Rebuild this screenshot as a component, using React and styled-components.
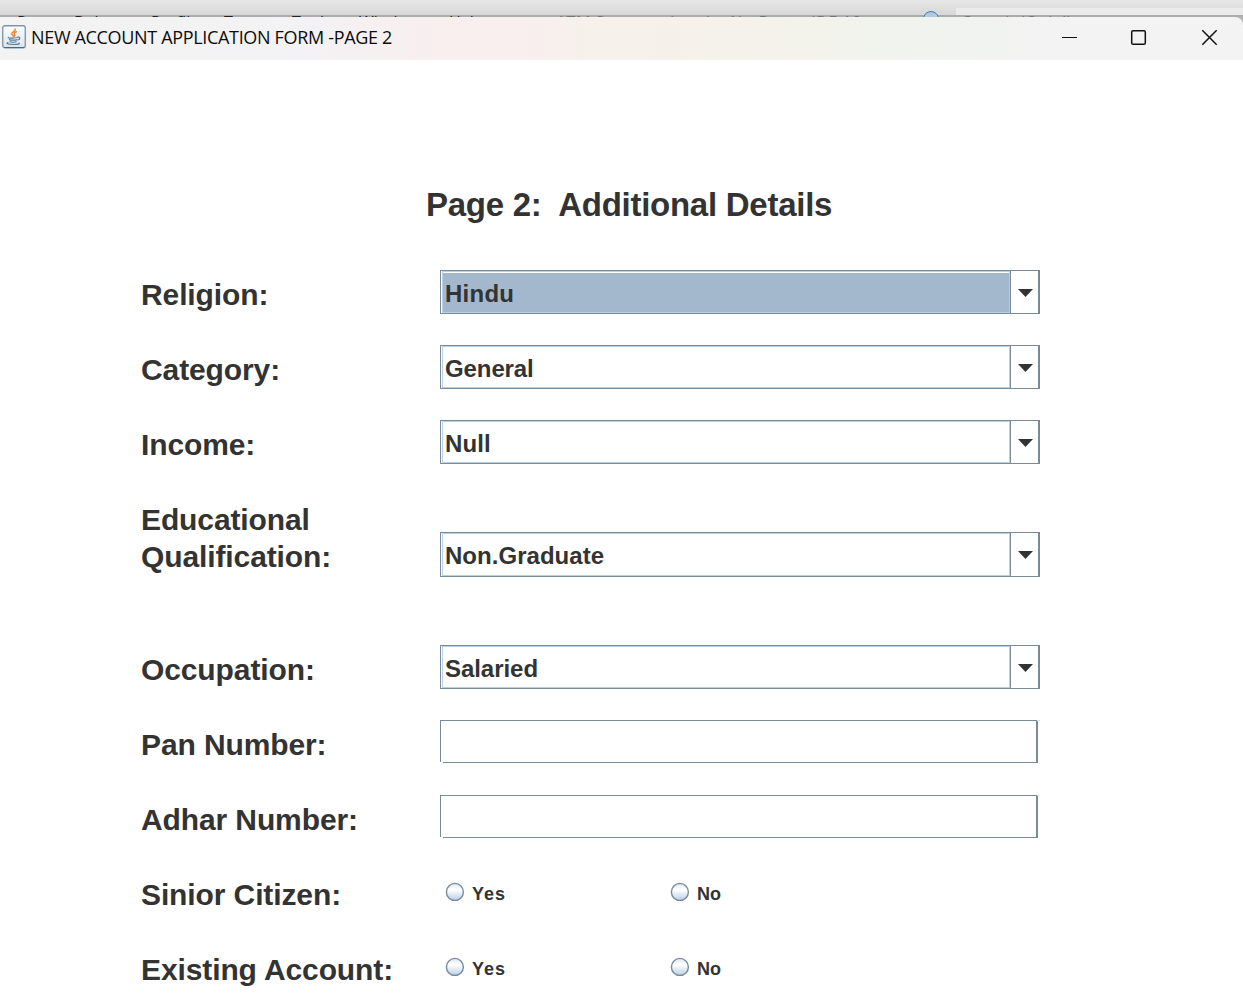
import React from "react";
import styled, { createGlobalStyle } from "styled-components";

const GlobalStyle = createGlobalStyle`
  * { box-sizing: border-box; }
  body { margin: 0; background: #fff; overflow: hidden; }
`;

const Screen = styled.div`
  width: 1243px;
  height: 993px;
  overflow: hidden;
  background: #fff;
  color: #333;
  font-family: "Liberation Sans", Arial, sans-serif;
`;

const Backdrop = styled.div`
  position: relative;
  height: 17px;
  overflow: hidden;
  background: linear-gradient(to bottom, #e8e8e8, #d6d6d6 15px, #abadab 15px);
  font: 16px/20px "Open Sans", "Noto Sans", sans-serif;
`;

const Search = styled.div`
  position: absolute;
  left: 956px;
  top: 8px;
  right: 0;
  height: 7px;
  background: #ebebeb;
`;

const MenuWord = styled.span`
  position: absolute;
  left: ${(p) => p.$x}px;
  top: 12px;
  white-space: pre;
  letter-spacing: ${(p) => p.$track || 0}px;
  color: ${(p) => (p.$dim ? "#747674" : "#222")};
`;

const Ring = styled.span`
  position: absolute;
  left: 923px;
  top: 11px;
  width: 16px;
  height: 16px;
  border: 1px solid #3b7cc0;
  border-radius: 50%;
  background: #b4c9de;
`;

const TitleWrap = styled.div`
  background: #b4b6b4;
`;

const TitleBar = styled.header`
  display: flex;
  align-items: flex-start;
  height: 43px;
  padding-left: 2px;
  border-top-right-radius: 8px;
  background: linear-gradient(to right, #f3f3f3 0, #f3f2f4 300px, #f8efee 440px, #f8efee 520px, #f6f1eb 600px, #f5f2ea 740px, #f2f3ec 840px, #f1f3f0 960px, #f3f3f3 1070px);
`;

const JavaIcon = styled.svg`
  flex: none;
  width: 24px;
  height: 24px;
  margin-top: 8px;
`;

const WindowTitle = styled.h1`
  flex: 1;
  margin: 8px 0 0 5px;
  color: #0c0c0c;
  font: 400 18px/25px "Open Sans", "Noto Sans", sans-serif;
  letter-spacing: -0.33px;
  white-space: nowrap;
`;

const Controls = styled.svg`
  flex: none;
  width: 193px;
  height: 43px;
`;

const Form = styled.main`
  padding: 127px 0 0 141px;
`;

const Heading = styled.h2`
  margin: 0 0 0 285px;
  height: 36px;
  font-size: 33px;
  line-height: 36px;
  letter-spacing: -0.26px;
  white-space: pre;
`;

const Fields = styled.div`
  display: flex;
  flex-direction: column;
  margin-top: 47px;
`;

const Row = styled.div`
  display: flex;
  height: ${(p) => (p.$tall ? 150 : 75)}px;
`;

const Label = styled.div`
  flex: none;
  width: 299px;
  padding-top: 6px;
  font-size: 30px;
  font-weight: 700;
  line-height: 37px;
  letter-spacing: -0.11px;
  white-space: pre-line;
`;

const Combo = styled.div`
  display: flex;
  width: 600px;
  height: ${(p) => (p.$low ? 45 : 44)}px;
  margin-top: ${(p) => (p.$low ? 37 : 0)}px;
  border: 1px solid #7a8a99;
  border-right-width: 2px;
`;

const Value = styled.div`
  flex: 1;
  margin-left: 1px;
  padding: 1px 0 0 2px;
  border: 1px solid #b8cfe5;
  background: ${(p) => (p.$focused ? "#a3b8cc" : "#fff")};
  box-shadow: ${(p) => (p.$focused ? "inset 0 1px #fff" : "none")};
  font-size: 24px;
  font-weight: 700;
  line-height: 42px;
  letter-spacing: ${(p) => p.$track || 0}px;
`;

const ArrowButton = styled.div`
  display: flex;
  justify-content: center;
  width: 28px;
  padding: 18px 0 0 1px;
  border-left: 1px solid #7a8a99;
`;

const Arrow = styled.svg`
  width: 15px;
  height: 8px;
  fill: #333;
`;

const TextBoxFrame = styled.div`
  position: relative;
  width: 600px;
  height: 43px;

  &::before, &::after {
    content: "";
    position: absolute;
    width: 3px;
    height: 1px;
    background: #fff;
  }
  &::before { left: 0; bottom: 0; }
  &::after { right: 0; top: 0; background: #e4e7ea; }
`;

const TextBox = styled.input`
  display: block;
  width: 598px;
  height: 43px;
  padding: 4px;
  border: 1px solid #7a8a99;
  border-right-width: 2px;
  border-radius: 0;
  outline: none;
  background: #fff;
  font: 700 24px "Liberation Sans", Arial, sans-serif;
`;

const Option = styled.label`
  display: flex;
  width: 225px;
  padding: 12px 0 0 5px;
  gap: 7px;
  font-size: 18px;
  font-weight: 700;
  line-height: 24px;
  letter-spacing: ${(p) => p.$track || 0}px;
`;

const RadioDot = styled.svg`
  flex: none;
  width: 20px;
  height: 20px;
`;

function Radio() {
  return (
    <RadioDot viewBox="0 0 20 20">
      <defs>
        <linearGradient id="bead" x2="0" y2="1">
          <stop stopColor="#d8e4f0" />
          <stop offset=".33" stopColor="#fff" />
          <stop offset=".42" stopColor="#fafcfe" />
          <stop offset="1" stopColor="#b8cfe5" />
        </linearGradient>
      </defs>
      <circle cx="9.9" cy="9.9" r="8.5" fill="url(#bead)" stroke="#7a8a99" strokeWidth="1.4" />
    </RadioDot>
  );
}

const combos = [
  { label: "Religion:", value: "Hindu", focused: true, track: 0.25 },
  { label: "Category:", value: "General", track: -0.1 },
  { label: "Income:", value: "Null", track: 0.15 },
  { label: "Educational\nQualification:", value: "Non.Graduate", low: true, track: 0.03 },
  { label: "Occupation:", value: "Salaried", track: -0.05 },
];

const menu = [
  ["Run", 17], ["Debug", 74], ["Profile", 151], ["Team", 224],
  ["Tools", 292], ["Window", 359], ["Help", 449],
];

export default function App() {
  return (
    <Screen>
      <GlobalStyle />
      <Backdrop>
        <Search />
        {menu.map(([word, x]) => <MenuWord key={word} $x={x}>{word}</MenuWord>)}
        <MenuWord $x={556} $track={0.5} $dim>ATM System - Apache NetBeans IDE 18</MenuWord>
        <MenuWord $x={963} $track={0.3} $dim>Search (Ctrl+I)</MenuWord>
        <Ring />
      </Backdrop>
      <TitleWrap>
        <TitleBar>
          <JavaIcon viewBox="0 0 24 24">
            <defs>
              <linearGradient id="tile" x2="0" y2="1">
                <stop stopColor="#fff" /><stop offset="1" stopColor="#dfe4e9" />
              </linearGradient>
            </defs>
            <rect x=".75" y=".75" width="22.5" height="22" rx="2" fill="url(#tile)" stroke="#7893aa" strokeWidth="1.3" />
            <path d="M2 22.5h20" stroke="#4c6982" />
            <g fill="none" strokeLinecap="round">
              <path d="M13.2 4c1 2-4.5 3.2-3.2 5.3.5.9 1.4 1.2 1.2 2.2M14.3 6.8c-2 .8-2.7 1.8-1.7 2.8.5.6.2 1.2-.3 1.7" stroke="#ef8a32" strokeWidth="1.5" />
              <path d="M6.5 12.3c-2 1 8 1 9 .1M7.5 14.6c1.5.8 5.5.8 7.4.1M8.1 16.7c1.5.6 4.3.6 6 0M15.7 12.2c2.8-.7 2.7 2.3.2 2.8M6 17.6c-3 1.2 2 2 6 1.9 4 0 6-.7 5-1.4" stroke="#557d9c" strokeWidth="1.2" />
            </g>
          </JavaIcon>
          <WindowTitle>NEW ACCOUNT APPLICATION FORM -PAGE 2</WindowTitle>
          <Controls viewBox="0 0 193 43" fill="none" stroke="#111" strokeWidth="1.5">
            <path d="M12 20.5h15" strokeWidth="1" />
            <rect x="81.7" y="13.7" width="13.6" height="13.6" rx="1.4" />
            <path d="M152.3 13.3l14.4 14.4m0-14.4l-14.4 14.4" />
          </Controls>
        </TitleBar>
      </TitleWrap>
      <Form>
        <Heading>{"Page 2:  Additional Details"}</Heading>
        <Fields>
          {combos.map((c) => (
            <Row key={c.label} $tall={c.low}>
              <Label>{c.label}</Label>
              <Combo $low={c.low}>
                <Value $focused={c.focused} $track={c.track}>{c.value}</Value>
                <ArrowButton><Arrow viewBox="0 0 15 8"><path d="M0 0h15L7.5 8z" /></Arrow></ArrowButton>
              </Combo>
            </Row>
          ))}
          {["Pan Number:", "Adhar Number:"].map((l) => (
            <Row key={l}>
              <Label>{l}</Label>
              <TextBoxFrame><TextBox aria-label={l} /></TextBoxFrame>
            </Row>
          ))}
          {["Sinior Citizen:", "Existing Account:"].map((l) => (
            <Row key={l}>
              <Label>{l}</Label>
              <Option $track={1}><Radio />Yes</Option>
              <Option><Radio />No</Option>
            </Row>
          ))}
        </Fields>
      </Form>
    </Screen>
  );
}
